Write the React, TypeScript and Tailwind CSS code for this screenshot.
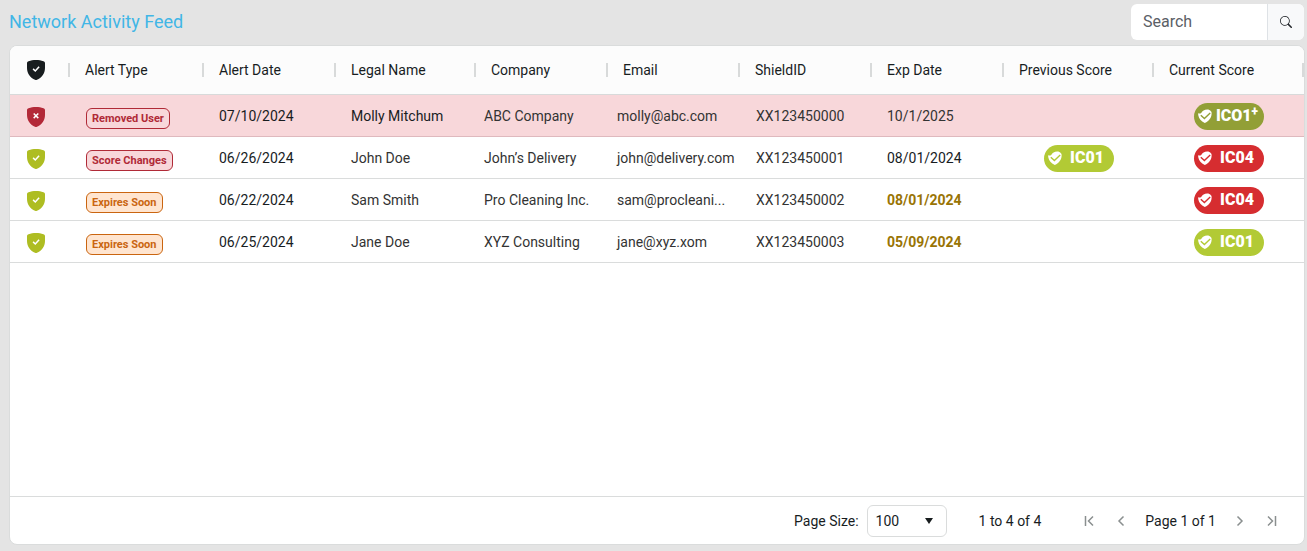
import { clsx } from "clsx";
import { BsSearch } from "react-icons/bs";

type Tone = "olive" | "lime" | "red";

interface Score {
  label: string;
  plus?: boolean;
  tone: Tone;
}

interface Alert {
  id: string;
  removed?: boolean;
  type: "Removed User" | "Score Changes" | "Expires Soon";
  date: string;
  name: string;
  company: string;
  email: string;
  expDate: string;
  expiring?: boolean;
  previous?: Score;
  current: Score;
}

const columns = [
  { label: "Alert Type", width: "w-[134px]" },
  { label: "Alert Date", width: "w-[132px]" },
  { label: "Legal Name", width: "w-[140px]" },
  { label: "Company", width: "w-[132px]" },
  { label: "Email", width: "w-[132px]" },
  { label: "ShieldID", width: "w-[132px]" },
  { label: "Exp Date", width: "w-[132px]" },
  { label: "Previous Score", width: "w-[150px]" },
  { label: "Current Score", width: "w-[150px]" },
];

const alerts: Alert[] = [
  {
    id: "XX123450000",
    removed: true,
    type: "Removed User",
    date: "07/10/2024",
    name: "Molly Mitchum",
    company: "ABC Company",
    email: "molly@abc.com",
    expDate: "10/1/2025",
    current: { label: "ICO1", plus: true, tone: "olive" },
  },
  {
    id: "XX123450001",
    type: "Score Changes",
    date: "06/26/2024",
    name: "John Doe",
    company: "John’s Delivery",
    email: "john@delivery.com",
    expDate: "08/01/2024",
    previous: { label: "IC01", tone: "lime" },
    current: { label: "IC04", tone: "red" },
  },
  {
    id: "XX123450002",
    type: "Expires Soon",
    date: "06/22/2024",
    name: "Sam Smith",
    company: "Pro Cleaning Inc.",
    email: "sam@procleani...",
    expDate: "08/01/2024",
    expiring: true,
    current: { label: "IC04", tone: "red" },
  },
  {
    id: "XX123450003",
    type: "Expires Soon",
    date: "06/25/2024",
    name: "Jane Doe",
    company: "XYZ Consulting",
    email: "jane@xyz.xom",
    expDate: "05/09/2024",
    expiring: true,
    current: { label: "IC01", tone: "lime" },
  },
];

const typeClasses: Record<Alert["type"], string> = {
  "Removed User": "border-[#b02a37] text-[#b02a37]",
  "Score Changes": "border-[#b02a37] bg-[#f8d7da] text-[#b02a37]",
  "Expires Soon": "border-[#ca6510] bg-[#ffe5d0] text-[#ca6510]",
};

// the text colour is picked up by the tick inside the logo
const toneClasses: Record<Tone, string> = {
  olive: "bg-[#929f36] text-[#929f36]",
  lime: "bg-[#b2ca35] text-[#b2ca35]",
  red: "bg-[#d62d30] text-[#d62d30]",
};

const ShieldIcon = ({ className, cross = false }: { className: string; cross?: boolean }) => (
  <svg viewBox="0 0 18 20" className={clsx("h-5 w-[18px]", className)} aria-hidden="true">
    <path
      fill="currentColor"
      d="M0 3.300C0 2.200.6 1.600 1.600 1.300 3.800.5 6.200 0 9 0s5.200.5 7.400 1.300c1 .3 1.600.9 1.600 2V8c0 5.600-3.500 9.800-8 11.800a2.200 2.200 0 0 1-2 0C3.500 17.800 0 13.600 0 8Z"
    />
    <path
      d={cross ? "M6.700 6.500l4.600 4.600M11.300 6.500l-4.600 4.600" : "M6.100 8.900l2.200 2.100 3.800-4.300"}
      fill="none"
      stroke="#fff"
      strokeWidth="1.500"
    />
  </svg>
);

const ScoreLogo = () => (
  <svg viewBox="0 0 14 14" className="h-3.5 w-3.5 shrink-0" aria-hidden="true">
    {/* shield with a wing tip on the left */}
    <path
      fill="#fff"
      d="M0 4.200c1.100.5 2.300.4 3.200-.2C4.400 2 6.400.6 9.200.5c1.600 0 2.900.6 3.700 1.800.8.800.8 1.700.7 2.700-.3 3.800-2.300 6.800-6.800 9C3 12.200.9 9.500.4 6.800Z"
    />
    <path d="M2.800 6.200l3.600 3.400 5.800-5.500" fill="none" stroke="currentColor" strokeWidth="1.400" />
  </svg>
);

const ScorePill = ({ score }: { score: Score }) => (
  <span
    className={clsx(
      "mx-auto flex h-[27px] w-[70px] items-center rounded-full pr-0.5 pl-1",
      toneClasses[score.tone],
    )}
  >
    <ScoreLogo />
    <span className="flex-1 text-center text-base/6 font-black text-white">
      {score.label}
      {score.plus && <sup className="text-xs/3">+</sup>}
    </span>
  </span>
);

const PagerButton = ({ label, path }: { label: string; path: string }) => (
  <button type="button" aria-label={label} className="flex size-4 items-center justify-center text-[#8a8f8f]">
    <svg viewBox="0 0 16 16" className="size-4" fill="none" stroke="currentColor" strokeWidth="1.500">
      <path d={path} />
    </svg>
  </button>
);

export default function App() {
  return (
    <main className="flex min-h-screen flex-col bg-[#e4e4e4] pt-1 pr-0.5 pb-1.5 pl-[9px] font-['Roboto',sans-serif] text-sm text-[#181d1f]">
      <header className="mb-[5px] flex items-center justify-between pr-px">
        <h1 className="text-lg text-[#41b6e6]">Network Activity Feed</h1>
        <form role="search" className="flex h-9 w-[173px] overflow-hidden rounded-md bg-white">
          <input
            type="search"
            aria-label="Search"
            placeholder="Search"
            className="min-w-0 flex-1 px-3 text-base outline-none placeholder:text-[#5b6066]"
          />
          <button
            type="button"
            aria-label="Submit search"
            className="flex w-[37px] items-center justify-center border-l border-[#dee2e6] bg-[#f8f9fa]"
          >
            <BsSearch className="size-3 text-[#212529]" />
          </button>
        </form>
      </header>

      <section className="flex flex-1 flex-col overflow-hidden rounded-lg border border-[#dadcdc] bg-white">
        <div className="flex-1 overflow-x-auto">
          <table className="w-full min-w-[1100px] table-fixed border-collapse text-left">
            <thead className="bg-[#fcfcfc]">
              <tr className="h-12 border-b border-[#d8dada]">
                <th scope="col" className="w-[60px]">
                  <div className="flex items-center justify-between pl-[17px]">
                    <ShieldIcon className="text-[#181d1f]" />
                    <span className="h-3.5 w-0.5 bg-[#d8dada]" />
                  </div>
                </th>
                {columns.map((column) => (
                  <th key={column.label} scope="col" className={clsx("font-normal", column.width)}>
                    <div className="flex items-center justify-between pl-[15px]">
                      {column.label}
                      <span className="h-3.5 w-0.5 bg-[#d8dada]" />
                    </div>
                  </th>
                ))}
              </tr>
            </thead>
            <tbody>
              {alerts.map((alert) => (
                <tr
                  key={alert.id}
                  className={clsx(
                    "h-[42px] border-b",
                    alert.removed ? "border-[#dfb9be] bg-[#f8d7da]" : "border-[#dadcdc]",
                  )}
                >
                  <td className="pt-1 pl-[17px]">
                    <ShieldIcon
                      cross={alert.removed}
                      className={alert.removed ? "text-[#b32938]" : "text-[#aebd22]"}
                    />
                  </td>
                  <td className="pt-1.5 pl-4">
                    <span
                      className={clsx(
                        "inline-block rounded-md border px-[5px] text-[11px]/[19px] font-bold",
                        typeClasses[alert.type],
                      )}
                    >
                      {alert.type}
                    </span>
                  </td>
                  <td className="pt-0.5 pl-[15px]">{alert.date}</td>
                  <td className={clsx("pt-0.5 pl-[15px]", !alert.removed && "text-[#333]")}>{alert.name}</td>
                  <td className="pt-0.5 pl-2 text-[#333]">{alert.company}</td>
                  <td className="pt-0.5 pl-[9px] text-[#333]">{alert.email}</td>
                  <td className="pt-0.5 pl-4 text-[#333]">{alert.id}</td>
                  <td
                    className={clsx(
                      "pt-0.5 pl-[15px]",
                      alert.expiring && "font-bold text-[#997404]",
                      alert.removed && "text-[#333]",
                    )}
                  >
                    {alert.expDate}
                  </td>
                  <td className="pt-0.5">{alert.previous && <ScorePill score={alert.previous} />}</td>
                  <td className="pt-0.5">
                    <ScorePill score={alert.current} />
                  </td>
                </tr>
              ))}
            </tbody>
          </table>
        </div>

        <footer className="flex h-12 items-center justify-end border-t border-[#dadcdc] pr-6">
          <label htmlFor="page-size" className="mr-2">
            Page Size:
          </label>
          <div className="relative mr-8">
            <select
              id="page-size"
              defaultValue="100"
              className="h-8 w-20 appearance-none rounded-md border border-[#dadcdc] bg-white pl-2"
            >
              <option>20</option>
              <option>50</option>
              <option>100</option>
            </select>
            <svg
              viewBox="0 0 8 6"
              className="pointer-events-none absolute top-[13px] right-3.5 h-1.5 w-2"
              aria-hidden="true"
            >
              <path d="M0 0h8L4 6Z" fill="#181d1f" />
            </svg>
          </div>
          <span className="mr-10">1 to 4 of 4</span>
          <nav aria-label="Pagination" className="flex items-center gap-4">
            <PagerButton label="First page" path="M4.500 3v10M12 3.500L7.500 8l4.500 4.500" />
            <PagerButton label="Previous page" path="M10.500 3.500L6 8l4.500 4.500" />
            <span>Page 1 of 1</span>
            <PagerButton label="Next page" path="M5.500 3.500L10 8l-4.500 4.500" />
            <PagerButton label="Last page" path="M11.500 3v10M4 3.500L8.500 8 4 12.500" />
          </nav>
        </footer>
      </section>
    </main>
  );
}
